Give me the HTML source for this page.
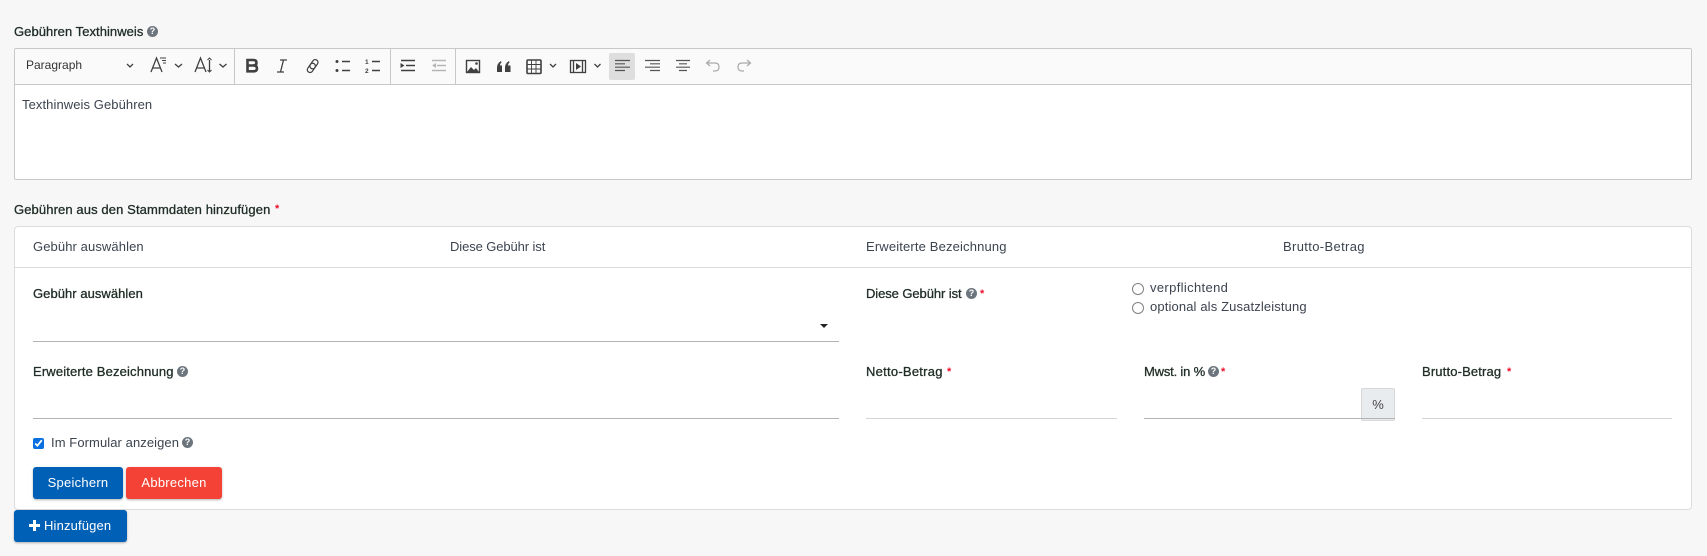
<!DOCTYPE html>
<html lang="de">
<head>
<meta charset="utf-8">
<title>Gebühren</title>
<style>
html,body{margin:0;padding:0}
body{width:1707px;height:556px;background:#f7f7f7;position:relative;overflow:hidden;font-family:"Liberation Sans",Arial,sans-serif;font-size:13px;color:#333}
.a{position:absolute;white-space:nowrap;line-height:16px}
.l{color:#1f2d26;-webkit-text-stroke:.3px #1f2d26;letter-spacing:.25px}
.r{color:#ee0f2d;font-size:11px;font-weight:700;line-height:12px}
.t{color:#3c4450;letter-spacing:.1px}
.q{position:absolute;width:11px;height:11px;border-radius:50%;background:#6c757d;color:#fff;font:700 9px/11px "Liberation Sans",sans-serif;text-align:center}
.h{position:absolute;height:1px}
.btn{position:absolute;height:32px;border-radius:3px;color:#fff;text-align:center;line-height:31px;font-size:13px;letter-spacing:.25px;box-shadow:0 1px 2px rgba(0,0,0,.3)}
input[type=radio]{appearance:none;-webkit-appearance:none;position:absolute;box-sizing:border-box;width:12px;height:12px;margin:0;background:#fff;border:1px solid #808080;border-radius:50%}
</style>
</head>
<body>
<div class="a l" style="left:14px;top:24px;letter-spacing:.05px">Gebühren Texthinweis</div>
<span class="q" style="left:147px;top:26px">?</span>

<div style="position:absolute;left:14px;top:48px;width:1676px;height:130px;border:1px solid #c8c8c8;border-radius:2px;background:#fff"></div>
<div style="position:absolute;left:15px;top:49px;width:1676px;height:35px;background:#fafafa;border-bottom:1px solid #c8c8c8"></div>

<svg style="position:absolute;left:0;top:0" width="800" height="90" fill="none" stroke="#404040" stroke-width="1.3">
<path d="M234.500 49V84M390.500 49V84M455.500 49V84" stroke="#c8c8c8" stroke-width="1"/>
<rect x="609" y="53" width="26" height="27" rx="2" fill="#dedede" stroke="none"/>
<path d="M127 64l3 3 3-3M175 64l3.500 3 3.500-3M219.500 64l3.500 3 3.500-3M550 64l3 3 3-3M594.500 64l3 3 3-3"/>
<path d="M151 72l5.500-14 5.500 14M153 68h7"/><path d="M160 58h6M162 60.500h4M163 63h3" stroke-width="1"/>
<path d="M195 72l5.500-14 5.500 14M197 68h7M209.500 60v11" stroke-width="1.300"/><path d="M207.500 60l2-2 2 2M207.500 70l2 2 2-2" stroke-width="1"/>
<path d="M247.500 60h5.500q3.500 0 3.500 2.700t-3.500 2.800h-5.500zM247.500 65.500h6q3.500 0 3.500 2.900t-3.500 2.900h-6z" stroke-width="2.600"/>
<path d="M280 60h7M277 72h7M283.500 60l-3 12" stroke-width="1.300"/>
<g stroke-width="1.200"><rect x="307.500" y="63.500" width="10" height="5.500" rx="2.700" transform="rotate(-55 312.500 66.250) translate(-2 0)"/><rect x="307.500" y="63.500" width="10" height="5.500" rx="2.700" transform="rotate(-55 312.500 66.250) translate(2.500 0)"/></g>
<circle cx="337" cy="61.500" r="1.500" fill="#404040" stroke="none"/><circle cx="337" cy="70.500" r="1.500" fill="#404040" stroke="none"/>
<path d="M342 61.500h8M342 70.500h8" stroke-width="1.500"/>
<path d="M372 61.500h8M372 70.500h8" stroke-width="1.500"/>
<text x="365" y="64" font-family="Liberation Sans" font-size="6.500" font-weight="700" fill="#404040" stroke="none">1</text>
<text x="365" y="73" font-family="Liberation Sans" font-size="6.500" font-weight="700" fill="#404040" stroke="none">2</text>
<path d="M401 60.500h14M406 65.500h9M401 70.500h14" stroke-width="1.400"/><path d="M400.500 63l4 2.500-4 2.500z" fill="#404040" stroke="none"/>
<path d="M432 60.500h14M432 70.500h14M437 65.500h9" stroke="#b5b5b5" stroke-width="1.400"/><path d="M436 63l-4 2.500 4 2.500z" fill="#b5b5b5" stroke="none"/>
<rect x="466.500" y="60.500" width="13" height="12" stroke-width="1.400"/><path d="M467 72l4-5 3 3 2-2 3 4z" fill="#404040" stroke="none"/><circle cx="476.500" cy="63.500" r="1.300" fill="#404040" stroke="none"/>
<path d="M497 72v-4.500q0-4 4-6.500l.5 1.500q-1.500 1-1.500 3h2v6.500zM505 72v-4.500q0-4 4-6.500l.5 1.500q-1.500 1-1.500 3h2.500v6.500z" fill="#404040" stroke="none"/>
<rect x="527" y="60" width="14" height="13.500" rx="1" stroke-width="1.600"/><path d="M527 64.500h14M527 69h14M531.500 60v13M536 60v13" stroke-width=".9"/>
<rect x="570.500" y="60.500" width="15" height="12" stroke-width="1.300"/><path d="M573.500 60.500v12M582.500 60.500v12" stroke-width="1.300"/><path d="M576 63l5 3.500-5 3.500z" fill="#404040" stroke="none"/>
<path d="M615 60.500h15M615 63.800h10M615 67.200h15M615 70.500h10" stroke="#555" stroke-width="1.200"/>
<path d="M645 60.500h15M650 63.800h10M645 67.200h15M650 70.500h10" stroke="#555" stroke-width="1.200"/>
<path d="M676 60.500h14M679 63.800h8M676 67.200h14M679 70.500h8" stroke="#555" stroke-width="1.200"/>
<path d="M710 60l-3.500 3 3.500 3M707 63h8q4 0 4 4t-4 4h-2" stroke="#aaa" stroke-width="1.200"/>
<path d="M747 60l3.500 3-3.500 3M750 63h-8q-4 0-4 4t4 4h2" stroke="#aaa" stroke-width="1.200"/>
</svg>
<div class="a" style="left:26px;top:57px;font-size:12px;color:#333">Paragraph</div>

<div class="a t" style="left:22px;top:97px;letter-spacing:.08px">Texthinweis Gebühren</div>

<div class="a l" style="left:14px;top:202px;letter-spacing:.11px">Gebühren aus den Stammdaten hinzufügen</div>
<span class="a r" style="left:275px;top:203px">*</span>

<div style="position:absolute;left:14px;top:226px;width:1676px;height:282px;background:#fff;border:1px solid #dcdcdc;border-radius:4px"></div>
<div class="h" style="left:15px;top:267px;width:1676px;background:#dcdcdc"></div>

<div class="a t" style="left:33px;top:239px">Gebühr auswählen</div>
<div class="a t" style="left:450px;top:239px;letter-spacing:-.1px">Diese Gebühr ist</div>
<div class="a t" style="left:866px;top:239px;letter-spacing:.15px">Erweiterte Bezeichnung</div>
<div class="a t" style="left:1283px;top:239px;letter-spacing:.35px">Brutto-Betrag</div>

<div class="a l" style="left:33px;top:286px;letter-spacing:.05px">Gebühr auswählen</div>
<div class="h" style="left:33px;top:341px;width:806px;background:#b3b3b3"></div>
<div style="position:absolute;left:820px;top:324px;width:0;height:0;border-left:4.500px solid transparent;border-right:4.500px solid transparent;border-top:4px solid #222"></div>

<div class="a l" style="left:866px;top:286px;letter-spacing:-.08px">Diese Gebühr ist</div>
<span class="q" style="left:966px;top:288px">?</span>
<span class="a r" style="left:980px;top:288px">*</span>

<input type="radio" name="g" style="left:1132px;top:283px">
<div class="a t" style="left:1150px;top:280px;letter-spacing:.35px">verpflichtend</div>
<input type="radio" name="g" style="left:1132px;top:302px">
<div class="a t" style="left:1150px;top:299px;letter-spacing:.13px">optional als Zusatzleistung</div>

<div class="a l" style="left:33px;top:364px;letter-spacing:.15px">Erweiterte Bezeichnung</div>
<span class="q" style="left:177px;top:366px">?</span>
<div class="h" style="left:33px;top:418px;width:806px;background:#b3b3b3"></div>

<div class="a l" style="left:866px;top:364px">Netto-Betrag</div>
<span class="a r" style="left:947px;top:366px">*</span>
<div class="h" style="left:866px;top:418px;width:251px;background:#d5d5d5"></div>

<div class="a l" style="left:1144px;top:364px;letter-spacing:-.19px">Mwst. in %</div>
<span class="q" style="left:1208px;top:366px">?</span>
<span class="a r" style="left:1221px;top:366px">*</span>
<div style="position:absolute;left:1361px;top:388px;width:34px;height:33px;box-sizing:border-box;background:#e9ecef;border:1px solid #d8d8d8;border-radius:2px;text-align:center;line-height:31px;color:#444">%</div>
<div class="h" style="left:1144px;top:418px;width:251px;background:#b3b3b3"></div>

<div class="a l" style="left:1422px;top:364px;letter-spacing:.15px">Brutto-Betrag</div>
<span class="a r" style="left:1507px;top:366px">*</span>
<div class="h" style="left:1422px;top:418px;width:250px;background:#d5d5d5"></div>

<input type="checkbox" checked style="position:absolute;left:33px;top:438px;width:11px;height:11px;margin:0;accent-color:#0a6fe0">
<div class="a t" style="left:51px;top:435px;letter-spacing:.08px">Im Formular anzeigen</div>
<span class="q" style="left:182px;top:437px">?</span>

<div class="btn" style="left:33px;top:467px;width:90px;background:#0060b6">Speichern</div>
<div class="btn" style="left:126px;top:467px;width:96px;background:#f44336">Abbrechen</div>
<div class="btn" style="left:14px;top:510px;width:113px;background:#0060b6"></div>
<svg style="position:absolute;left:29px;top:520px" width="11" height="11"><path d="M4 0h3v4h4v3H7v4H4V7H0V4h4z" fill="#fff"/></svg>
<div class="a" style="left:44px;top:518px;color:#fff;letter-spacing:.15px">Hinzufügen</div>
</body>
</html>
